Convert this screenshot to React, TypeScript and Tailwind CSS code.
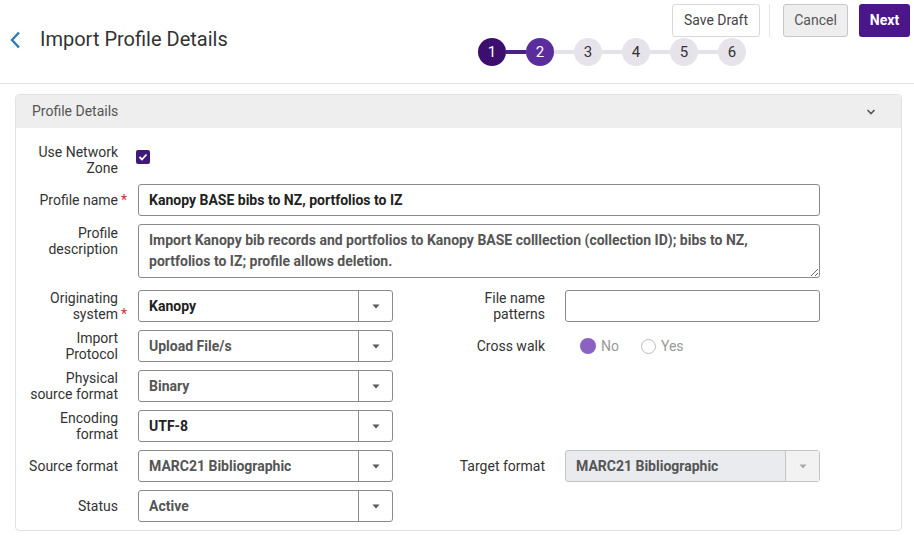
import React from "react";

const font = { fontFamily: "Roboto, 'Liberation Sans', sans-serif" };

function Label({ lines, required, width }: { lines: string[]; required?: boolean; width: string }) {
  return (
    <div className={`${width} shrink-0 text-right text-[14px] leading-4 text-[#333] pr-3`}>
      {lines.map((line, i) => (
        <div key={i}>
          {line}
          {required && i === lines.length - 1 && (
            <span className="inline-block w-3 -mr-3 text-center text-[#d0312d]">*</span>
          )}
        </div>
      ))}
    </div>
  );
}

function Caret({ color = "#555" }: { color?: string }) {
  return (
    <svg width="8" height="5" viewBox="0 0 8 5">
      <path d="M0.5 0.5 L7.5 0.5 L4 4.5 Z" fill={color} />
    </svg>
  );
}

function Select({ value, dark, disabled }: { value: string; dark?: boolean; disabled?: boolean }) {
  return (
    <div
      className={`w-[255px] h-8 flex rounded-[3px] border ${
        disabled ? "border-[#c4c4c4] bg-[#e9ebee]" : "border-[#8a8a8a] bg-white"
      }`}
    >
      <div
        className={`flex-1 flex items-center pl-[10px] text-[14px] font-bold ${
          dark ? "text-[#222]" : "text-[#555]"
        }`}
      >
        {value}
      </div>
      <div
        className={`w-[34px] flex items-center justify-center border-l ${
          disabled ? "border-[#c4c4c4] bg-[#f2f2f2]" : "border-[#8a8a8a]"
        }`}
      >
        <Caret color={disabled ? "#aaa" : "#555"} />
      </div>
    </div>
  );
}

const steps = [1, 2, 3, 4, 5, 6];

export default function App() {
  return (
    <div className="w-[914px] h-[540px] bg-white overflow-hidden" style={font}>
      {/* Header */}
      <div className="h-[84px] flex border-b border-[#e2e2e2]">
        <div className="flex items-start pt-[29px] pl-[10px] gap-[19px]">
          <svg width="11" height="18" viewBox="0 0 11 18" className="mt-[2px]">
            <polyline points="9,1.5 2,9 9,16.5" fill="none" stroke="#2f7bb4" strokeWidth="2.4" />
          </svg>
          <h1 className="text-[20px] leading-5 text-[#333]">Import Profile Details</h1>
        </div>
        <div className="flex-1 flex flex-col items-end pr-[4px] pt-[4px]">
          <div className="flex items-center">
            <button className="h-[33px] w-[88px] rounded-[3px] border border-[#d8d8d8] bg-white text-[14px] text-[#444]">
              Save Draft
            </button>
            <div className="w-px h-[33px] bg-[#e6e6e6] ml-[9px] mr-[13px]" />
            <button className="h-[33px] w-[65px] rounded-[3px] border border-[#c8c8c8] bg-[#eeeeee] text-[14px] text-[#555]">
              Cancel
            </button>
            <button className="ml-[11px] h-[33px] w-[51px] rounded-[3px] bg-[#4a168a] text-[14px] font-bold text-white">
              Next
            </button>
          </div>
          <div className="flex items-center mr-[164px] mt-px">
            {steps.map((s, i) => (
              <React.Fragment key={s}>
                {i > 0 && <div className={`w-5 h-[4px] ${i === 1 ? "bg-[#4b1f8a]" : "bg-[#e4e2e9]"}`} />}
                <div
                  className={`w-7 h-7 rounded-full flex items-center justify-center text-[15px] ${
                    s === 1
                      ? "bg-[#3c0f6e] text-white"
                      : s === 2
                      ? "bg-[#5b2d9c] text-white"
                      : "bg-[#e6e4ea] text-[#333]"
                  }`}
                >
                  {s}
                </div>
              </React.Fragment>
            ))}
          </div>
        </div>
      </div>

      {/* Panel */}
      <div className="mt-[10px] ml-[15px] w-[887px] rounded-[4px] border border-[#e2e2e2] pb-2">
        <div className="h-[33px] bg-[#eeeeee] rounded-t-[4px] flex items-center justify-between pl-4 pr-[25px]">
          <span className="text-[14px] text-[#555]">Profile Details</span>
          <svg width="10" height="6" viewBox="0 0 10 6">
            <polyline points="1.5,1 5,4.5 8.5,1" fill="none" stroke="#555" strokeWidth="1.6" />
          </svg>
        </div>

        <div className="pt-[16px] flex flex-col gap-2">
          <div className="flex items-center gap-2 h-8">
            <Label width="w-[114px]" lines={["Use Network", "Zone"]} />
            <div className="w-[14px] h-[14px] rounded-[2px] bg-[#3f1a7a] flex items-center justify-center -ml-[2px] -mt-[6px]">
              <svg width="10" height="8" viewBox="0 0 10 8">
                <polyline points="1.5,4 4,6.5 8.5,1.5" fill="none" stroke="white" strokeWidth="1.8" />
              </svg>
            </div>
          </div>

          <div className="flex items-center gap-2">
            <Label width="w-[114px]" lines={["Profile name"]} required />
            <div className="w-[682px] h-8 rounded-[3px] border border-[#8a8a8a] flex items-center pl-[10px] text-[14px] font-bold text-[#222]">
              Kanopy BASE bibs to NZ, portfolios to IZ
            </div>
          </div>

          <div className="flex items-start gap-2">
            <Label width="w-[114px] pt-px" lines={["Profile", "description"]} />
            <textarea
              readOnly
              className="w-[682px] h-[54px] rounded-[3px] border border-[#8a8a8a] px-[10px] pt-[5px] text-[14px] leading-[21px] font-bold text-[#555] outline-none"
              style={font}
              value="Import Kanopy bib records and portfolios to Kanopy BASE colllection (collection ID); bibs to NZ, portfolios to IZ; profile allows deletion."
            />
          </div>

          <div className="flex items-center gap-2 mt-1">
            <Label width="w-[114px]" lines={["Originating", "system"]} required />
            <Select value="Kanopy" dark />
            <Label width="w-[156px]" lines={["File name", "patterns"]} />
            <div className="w-[255px] h-8 rounded-[3px] border border-[#8a8a8a]" />
          </div>

          <div className="flex items-center gap-2">
            <Label width="w-[114px]" lines={["Import", "Protocol"]} />
            <Select value="Upload File/s" />
            <Label width="w-[156px]" lines={["Cross walk"]} />
            <div className="flex items-center pl-[15px] text-[14px] text-[#999]">
              <span className="w-4 h-4 rounded-full bg-[#8b62c0]" />
              <span className="ml-[5px]">No</span>
              <span className="ml-[22px] w-[15px] h-[15px] rounded-full border border-[#bbb] bg-white" />
              <span className="ml-[5px]">Yes</span>
            </div>
          </div>

          <div className="flex items-center gap-2">
            <Label width="w-[114px]" lines={["Physical", "source format"]} />
            <Select value="Binary" />
          </div>

          <div className="flex items-center gap-2">
            <Label width="w-[114px]" lines={["Encoding", "format"]} />
            <Select value="UTF-8" dark />
          </div>

          <div className="flex items-center gap-2">
            <Label width="w-[114px]" lines={["Source format"]} />
            <Select value="MARC21 Bibliographic" />
            <Label width="w-[156px]" lines={["Target format"]} />
            <Select value="MARC21 Bibliographic" disabled />
          </div>

          <div className="flex items-center gap-2">
            <Label width="w-[114px]" lines={["Status"]} />
            <Select value="Active" />
          </div>
        </div>
      </div>
    </div>
  );
}
